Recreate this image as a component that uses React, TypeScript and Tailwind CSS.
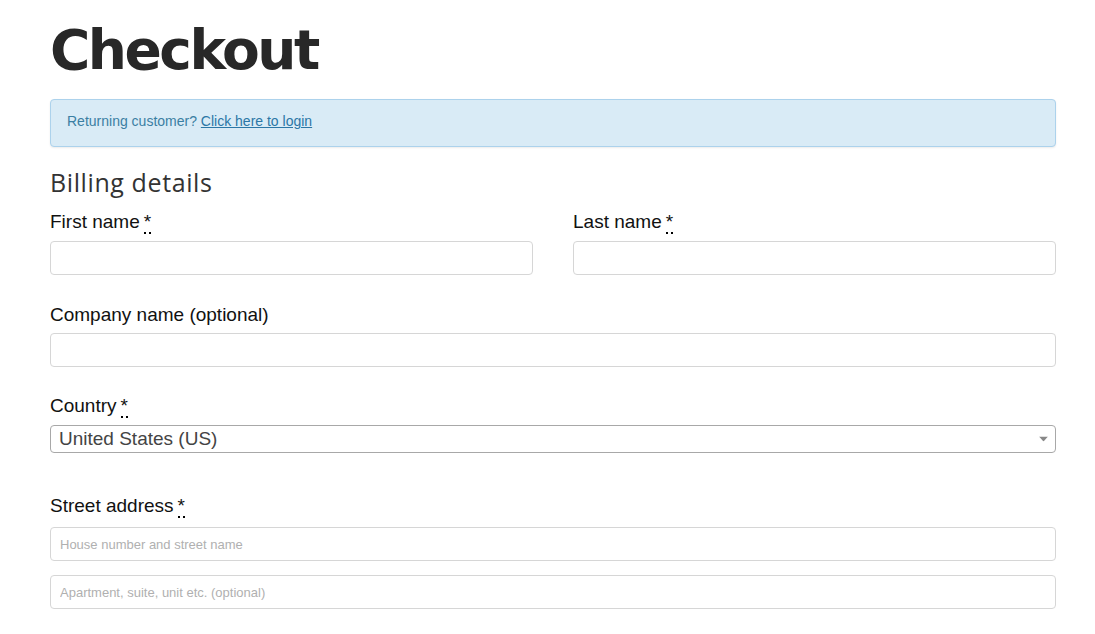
import { ReactNode } from "react";

function Required() {
  return (
    <abbr
      title="required"
      className="ml-1 cursor-help border-b-2 border-dotted border-black"
      style={{ textDecoration: "none" }}
    >
      *
    </abbr>
  );
}

function Label({ children, required }: { children: ReactNode; required?: boolean }) {
  return (
    <label className="block text-[19px] leading-[24px] text-[#111]">
      {children}
      {required ? <Required /> : null}
    </label>
  );
}

function TextInput({ placeholder }: { placeholder?: string }) {
  return (
    <input
      type="text"
      placeholder={placeholder}
      className="block h-[34px] w-full rounded-[4px] border border-[#d6d6d6] bg-white px-[9px] text-[13px] text-[#333] placeholder:text-[#b0b0b0] focus:outline-none"
    />
  );
}

export default function App() {
  return (
    <div className="min-h-screen bg-white font-['Liberation_Sans',Arial,sans-serif]">
      <div className="pl-[50px] pr-[39px] pt-[15px]">
        <h1 className="font-['DejaVu_Sans',sans-serif] text-[55px] font-bold leading-[70px] tracking-[-2.5px] text-[#282828]">
          Checkout
        </h1>

        <div className="mt-[14px] flex h-[48px] items-center rounded-[4px] border border-[#acd2ec] bg-[#d9ebf6] px-[16px] pb-[3px] text-[14px] text-[#3b7fa3] shadow-[0_1px_2px_rgba(0,0,0,0.08)]">
          Returning customer?&nbsp;
          <a href="#" className="text-[#2b77a6] underline">
            Click here to login
          </a>
        </div>

        <h3 className="mt-[18px] font-['Open_Sans',sans-serif] text-[25px] font-normal leading-[34px] tracking-[0.6px] text-[#333]">
          Billing details
        </h3>

        <form className="mt-[11px]">
          <div className="grid grid-cols-2 gap-x-[40px]">
            <div>
              <Label required>First name</Label>
              <div className="mt-[7px]">
                <TextInput />
              </div>
            </div>
            <div>
              <Label required>Last name</Label>
              <div className="mt-[7px]">
                <TextInput />
              </div>
            </div>
          </div>

          <div className="mt-[28px]">
            <Label>Company name (optional)</Label>
            <div className="mt-[6px]">
              <TextInput />
            </div>
          </div>

          <div className="mt-[27px]">
            <Label required>Country</Label>
            <div className="relative mt-[7px] flex h-[28px] items-center rounded-[4px] border border-[#a8a8a8] bg-white px-[8px] text-[19px] text-[#444]">
              United States (US)
              <svg
                className="absolute right-[7px] top-1/2 -translate-y-1/2"
                width="9"
                height="5"
                viewBox="0 0 9 5"
              >
                <path d="M0 0h9L4.5 5z" fill="#888" />
              </svg>
            </div>
          </div>

          <div className="mt-[41px]">
            <Label required>Street address</Label>
            <div className="mt-[9px]">
              <TextInput placeholder="House number and street name" />
            </div>
            <div className="mt-[14px]">
              <TextInput placeholder="Apartment, suite, unit etc. (optional)" />
            </div>
          </div>
        </form>
      </div>
    </div>
  );
}
